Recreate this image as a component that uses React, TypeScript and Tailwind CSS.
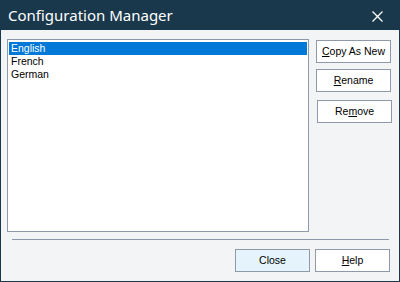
const ui = { fontFamily: '"Liberation Sans", Arial, sans-serif' };

function Btn({ children, className = '' }: { children: React.ReactNode; className?: string }) {
  return (
    <div
      className={`flex h-[23px] w-[75px] items-center justify-center border border-[#8e9aa9] text-[10.5px] text-black ${className}`}
    >
      {children}
    </div>
  );
}

export default function App() {
  const langs = ['English', 'French', 'German'];
  return (
    <div className="flex h-[282px] w-[400px] flex-col border border-[#1a384b] bg-[#f3f4f6]" style={ui}>
      <div className="flex h-[29px] shrink-0 items-center justify-between bg-[#1a384b] pl-[7px] pr-[16px]">
        <span className="text-[15px] leading-none text-white" style={{ fontFamily: '"Noto Sans", sans-serif' }}>
          Configuration Manager
        </span>
        <svg width="11" height="11" viewBox="0 0 11 11" className="mt-[1px]">
          <path d="M0.5 0.5 L10.5 10.5 M10.5 0.5 L0.5 10.5" stroke="white" strokeWidth="1.3" />
        </svg>
      </div>

      <div className="flex flex-1 flex-col">
        <div className="flex pl-[6px] pt-[9px]">
          <div className="h-[193px] w-[302px] border border-[#8e9aa9] bg-white px-[1px] pt-[2px]">
            {langs.map((l, i) => (
              <div
                key={l}
                className={`h-[13px] pl-[2px] text-[10.5px] leading-[13px] ${i === 0 ? 'bg-[#0078d7] text-white' : 'text-black'}`}
              >
                {l}
              </div>
            ))}
          </div>
          <div className="ml-[7px] flex flex-col pt-[1px]">
            <Btn className="bg-white">
              <span>
                <u>C</u>opy As New
              </span>
            </Btn>
            <Btn className="mt-[6px] bg-white">
              <span>
                <u>R</u>ename
              </span>
            </Btn>
            <Btn className="ml-[1px] mt-[8px] bg-white">
              <span>
                Re<u>m</u>ove
              </span>
            </Btn>
          </div>
        </div>

        <div className="ml-[11px] mt-[7px] h-px w-[377px] bg-[#8e9aa9]" />

        <div className="mt-[9px] flex justify-end gap-[5px] pr-[9px]">
          <Btn className="bg-[#e5f4fc]">Close</Btn>
          <Btn className="bg-white">
            <span>
              <u>H</u>elp
            </span>
          </Btn>
        </div>
      </div>
    </div>
  );
}
